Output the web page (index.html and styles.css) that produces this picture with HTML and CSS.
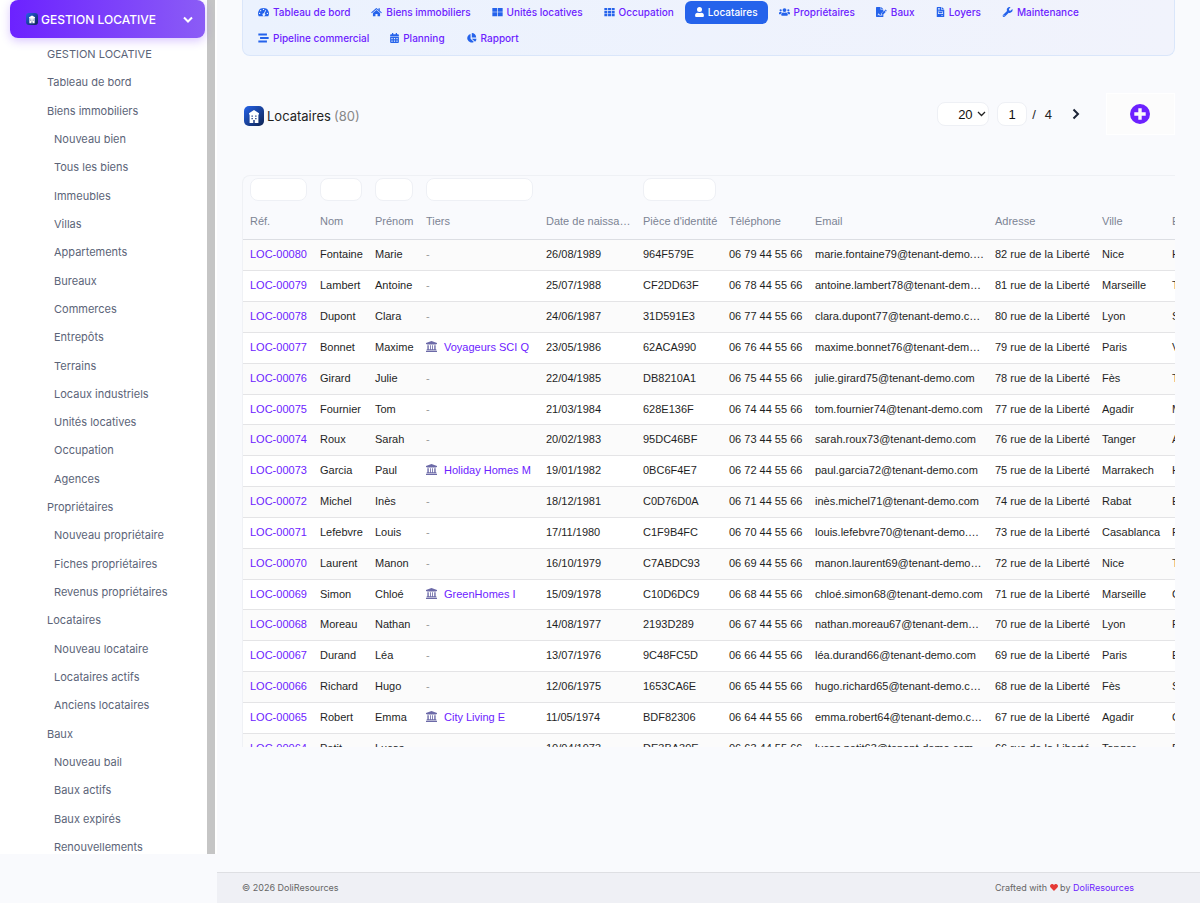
FILE: index.html
```html
<!DOCTYPE html>
<html lang="fr">
<head>
    <meta charset="UTF-8">
    <meta name="viewport" content="width=device-width, initial-scale=1.0">
    <title>Locataires</title>
    <link rel="stylesheet" href="styles.css">
</head>
<body>
    <!-- Icon set -->
    <svg class="icon-defs" aria-hidden="true">
        <defs>
            <linearGradient id="logo-bg" x1="0" y1="0" x2="1" y2="1">
                <stop offset="0" stop-color="#2563eb"/>
                <stop offset="1" stop-color="#0f2350"/>
            </linearGradient>
        </defs>
        <symbol id="i-logo" viewBox="0 0 20 20">
            <rect width="20" height="20" rx="5" fill="url(#logo-bg)"/>
            <path fill="#fff" d="M10 4l5 3.200v1.200h-.6V17H5.600V8.400H5V7.200z"/>
            <path fill="#17357c" d="M7.500 9.500h1.300v1.300H7.500zM11.200 9.500h1.300v1.300h-1.300zM7.500 12h1.300v1.300H7.500zM11.200 12h1.300v1.300h-1.300zM9.300 14h1.400v3H9.300z"/>
        </symbol>
        <symbol id="i-gauge" viewBox="0 0 16 14">
            <path fill-rule="evenodd" d="M8 1a8 8 0 0 0-6.900 12h13.800A8 8 0 0 0 8 1zM8 2.200a1 1 0 1 1 0 2 1 1 0 0 1 0-2zM3.800 4a1 1 0 1 1 0 2 1 1 0 0 1 0-2zM2.300 8a1 1 0 1 1 0 2 1 1 0 0 1 0-2zM13.700 8a1 1 0 1 1 0 2 1 1 0 0 1 0-2zM10.900 4.100l1 .5-2.200 4.600a2 2 0 1 1-1.200-.4z"/>
        </symbol>
        <symbol id="i-home" viewBox="0 0 16 14">
            <path d="M8 1.200l2.900 2.400V1.500h1.900v3.700l3 2.500-.9 1.100L8 3.100 1.100 8.800.2 7.700 7.200 1.400z"/>
            <path d="M8 4.200l5.200 4.300v4.700H9.500V9.800h-3v3.400H2.800V8.500z"/>
        </symbol>
        <symbol id="i-large" viewBox="0 0 16 14">
            <path d="M.5 1h7v5.500h-7zM8.500 1h7v5.500h-7zM.5 7.500h7V13h-7zM8.500 7.500h7V13h-7z"/>
        </symbol>
        <symbol id="i-grid" viewBox="0 0 16 14">
            <path d="M.5 1h4.300v3.400H.5zM5.900 1h4.300v3.400H5.900zM11.200 1h4.300v3.400h-4.300zM.5 5.400h4.300v3.300H.5zM5.900 5.400h4.300v3.300H5.900zM11.200 5.400h4.300v3.300h-4.300zM.5 9.700h4.300V13H.5zM5.900 9.700h4.300V13H5.900zM11.200 9.700h4.300V13h-4.300z"/>
        </symbol>
        <symbol id="i-user" viewBox="0 0 14 16">
            <path d="M7 8a4 4 0 1 0 0-8 4 4 0 0 0 0 8zm2.800 1H9.300a5.400 5.400 0 0 1-4.600 0h-.5A4.200 4.200 0 0 0 0 13.200v1.300A1.500 1.500 0 0 0 1.500 16h11a1.500 1.500 0 0 0 1.500-1.500v-1.300A4.200 4.200 0 0 0 9.800 9z"/>
        </symbol>
        <symbol id="i-users" viewBox="0 0 20 14">
            <path d="M3 6a2 2 0 1 0 0-4 2 2 0 0 0 0 4zm14 0a2 2 0 1 0 0-4 2 2 0 0 0 0 4zm1 1h-2c-.6 0-1 .2-1.400.6 1.300.7 2.200 2 2.400 3.400h2c.6 0 1-.4 1-1V9a2 2 0 0 0-2-2zM10 7a3.500 3.500 0 1 0 0-7 3.500 3.500 0 0 0 0 7zm2.400 1h-.3a4.800 4.800 0 0 1-4.200 0h-.3A3.600 3.600 0 0 0 4 11.600v.9c0 .8.7 1.500 1.500 1.500h9c.8 0 1.500-.7 1.500-1.500v-.9A3.600 3.600 0 0 0 12.400 8zM5.400 7.600A2 2 0 0 0 4 7H2a2 2 0 0 0-2 2v1c0 .6.400 1 1 1h2a4.500 4.500 0 0 1 2.400-3.400z"/>
        </symbol>
        <symbol id="i-sign" viewBox="0 0 18 16">
            <path fill-rule="evenodd" d="M1 0h6.500v4.500H12v2.300L8 10.700V13H6.500l-.8-1.500-1 .3-.7-2-1.400 3.500H4l.6-1.200.9 1.700H10l2-2V16H1a1 1 0 0 1-1-1V1a1 1 0 0 1 1-1zM8.500 0L12 3.500H8.500z"/>
            <path d="M15.500 3.800l2.200 2.200-1.200 1.200-2.200-2.200zM13.700 5.700l2.200 2.200-4.500 4.400H9.200v-2.200z"/>
        </symbol>
        <symbol id="i-invoice" viewBox="0 0 12 16">
            <path fill-rule="evenodd" d="M1 0h6v4.500h5V15a1 1 0 0 1-1 1H1a1 1 0 0 1-1-1V1a1 1 0 0 1 1-1zm1 2v1h3V2zm0 2v1h3V4zm0 3v4h8V7zm1 1h6v2H3zm4 5v1h3v-1zM8 0l4 3.500H8z"/>
        </symbol>
        <symbol id="i-wrench" viewBox="0 0 16 16">
            <path fill-rule="evenodd" d="M15.900 3.700a.4.400 0 0 0-.6-.2l-2.400 2.400-2.200-.4-.4-2.200L12.700.9a.4.400 0 0 0-.2-.6 4.500 4.500 0 0 0-5.300 6L.7 12.800a2 2 0 0 0 2.800 2.800L10 9.100a4.500 4.500 0 0 0 5.900-5.400zM2.100 13.300a.8.800 0 1 1 0 1.500.8.800 0 0 1 0-1.500z"/>
        </symbol>
        <symbol id="i-stream" viewBox="0 0 16 14">
            <path d="M.5.500h12.500v3H.5zM3 5.500h12.500v3H3zM.5 10.500h12.500v3H.5z"/>
        </symbol>
        <symbol id="i-calendar" viewBox="0 0 14 16">
            <path fill-rule="evenodd" d="M3 0h2v2h4V0h2v2h1.500A1.500 1.500 0 0 1 14 3.500V5H0V3.500A1.500 1.500 0 0 1 1.500 2H3zM0 6h14v8.500a1.500 1.500 0 0 1-1.500 1.500h-11A1.500 1.500 0 0 1 0 14.500zm2 2v2h2V8zm4 0v2h2V8zm4 0v2h2V8zm-8 4v2h2v-2zm4 0v2h2v-2zm4 0v2h2v-2z"/>
        </symbol>
        <symbol id="i-pie" viewBox="0 0 17 16">
            <path d="M7 1.500V9l5.300 5.300A7 7 0 1 1 7 1.500zM9 0a7 7 0 0 1 7 7H9zM9 9h7.500a7.500 7.500 0 0 1-2.300 5z"/>
        </symbol>
        <symbol id="i-bank" viewBox="0 0 16 16">
            <path d="M8 0l8 3v1.500h-1V5H1v-.5H0V3zM2 6h2v6h2V6h1.200v6h1.600V6H10v6h2V6h2v6h1v1.500H1V12h1zM0 14.200h16V16H0z"/>
        </symbol>
        <symbol id="i-plus" viewBox="0 0 20 20">
            <path fill-rule="evenodd" d="M10 0a10 10 0 1 0 0 20 10 10 0 0 0 0-20zM8.300 4.300h3.400v4h4v3.400h-4v4H8.300v-4h-4V8.300h4z"/>
        </symbol>
        <symbol id="i-heart" viewBox="0 0 16 14">
            <path d="M8 14L1.200 7.200C-.6 5.300-.3 2.200 1.700.8 3.600-.6 6-.2 7.500 1.400L8 1.900l.5-.5C10-.2 12.400-.6 14.300.8c2 1.400 2.300 4.500.5 6.400z"/>
        </symbol>
    </svg>

    <aside class="sidebar">
        <button class="sidebar-title" type="button">
            <svg class="sidebar-logo"><use href="#i-logo"/></svg>
            <span>GESTION LOCATIVE</span>
            <svg class="chevron" viewBox="0 0 10 7"><path d="M1 1.500l4 4 4-4"/></svg>
        </button>
        <ul class="menu">
            <li><a href="#">GESTION LOCATIVE</a></li>
            <li><a href="#">Tableau de bord</a></li>
            <li><a href="#">Biens immobiliers</a></li>
            <li class="sub"><a href="#">Nouveau bien</a></li>
            <li class="sub"><a href="#">Tous les biens</a></li>
            <li class="sub"><a href="#">Immeubles</a></li>
            <li class="sub"><a href="#">Villas</a></li>
            <li class="sub"><a href="#">Appartements</a></li>
            <li class="sub"><a href="#">Bureaux</a></li>
            <li class="sub"><a href="#">Commerces</a></li>
            <li class="sub"><a href="#">Entrepôts</a></li>
            <li class="sub"><a href="#">Terrains</a></li>
            <li class="sub"><a href="#">Locaux industriels</a></li>
            <li class="sub"><a href="#">Unités locatives</a></li>
            <li class="sub"><a href="#">Occupation</a></li>
            <li class="sub"><a href="#">Agences</a></li>
            <li><a href="#">Propriétaires</a></li>
            <li class="sub"><a href="#">Nouveau propriétaire</a></li>
            <li class="sub"><a href="#">Fiches propriétaires</a></li>
            <li class="sub"><a href="#">Revenus propriétaires</a></li>
            <li><a href="#">Locataires</a></li>
            <li class="sub"><a href="#">Nouveau locataire</a></li>
            <li class="sub"><a href="#">Locataires actifs</a></li>
            <li class="sub"><a href="#">Anciens locataires</a></li>
            <li><a href="#">Baux</a></li>
            <li class="sub"><a href="#">Nouveau bail</a></li>
            <li class="sub"><a href="#">Baux actifs</a></li>
            <li class="sub"><a href="#">Baux expirés</a></li>
            <li class="sub"><a href="#">Renouvellements</a></li>
        </ul>
    </aside>

    <div class="page">
        <main class="content">
            <nav class="tabs">
                <a href="#"><svg><use href="#i-gauge"/></svg>Tableau de bord</a>
                <a href="#"><svg><use href="#i-home"/></svg>Biens immobiliers</a>
                <a href="#"><svg><use href="#i-large"/></svg>Unités locatives</a>
                <a href="#"><svg><use href="#i-grid"/></svg>Occupation</a>
                <a href="#" class="active"><svg class="narrow"><use href="#i-user"/></svg>Locataires</a>
                <a href="#"><svg><use href="#i-users"/></svg>Propriétaires</a>
                <a href="#"><svg><use href="#i-sign"/></svg>Baux</a>
                <a href="#"><svg class="narrow"><use href="#i-invoice"/></svg>Loyers</a>
                <a href="#"><svg><use href="#i-wrench"/></svg>Maintenance</a>
                <a href="#"><svg><use href="#i-stream"/></svg>Pipeline commercial</a>
                <a href="#"><svg class="narrow"><use href="#i-calendar"/></svg>Planning</a>
                <a href="#"><svg><use href="#i-pie"/></svg>Rapport</a>
            </nav>

            <header class="list-header">
                <h1><svg><use href="#i-logo"/></svg>Locataires <span>(80)</span></h1>
                <div class="pager">
                    <select aria-label="Lignes par page"><option>20</option></select>
                    <input type="text" value="1" aria-label="Page">
                    <span>/</span>
                    <a href="#">4</a>
                    <a href="#" class="next" aria-label="Page suivante"><svg viewBox="0 0 8 12"><path d="M1.500 1.500L6 6l-4.500 4.500"/></svg></a>
                </div>
                <a href="#" class="add" aria-label="Nouveau locataire"><svg><use href="#i-plus"/></svg></a>
            </header>

            <div class="table-wrap">
                <table>
                    <colgroup>
                        <col class="c-ref"><col class="c-nom"><col class="c-prenom"><col class="c-tiers"><col class="c-date"><col class="c-piece"><col class="c-tel"><col class="c-email"><col class="c-adresse"><col class="c-ville"><col class="c-last">
                    </colgroup>
                    <thead>
                        <tr class="filters">
                            <td><input type="text" aria-label="Réf."></td>
                            <td><input type="text" aria-label="Nom"></td>
                            <td><input type="text" aria-label="Prénom"></td>
                            <td><input type="text" aria-label="Tiers"></td>
                            <td></td>
                            <td><input type="text" aria-label="Pièce d'identité"></td>
                            <td></td><td></td><td></td><td></td><td></td>
                        </tr>
                        <tr>
                            <th>Réf.</th><th>Nom</th><th>Prénom</th><th>Tiers</th><th>Date de naissance</th><th>Pièce d'identité</th><th>Téléphone</th><th>Email</th><th>Adresse</th><th>Ville</th><th>E</th>
                        </tr>
                    </thead>
                    <tbody>
                        <tr><td><a href="#">LOC-00080</a></td><td>Fontaine</td><td>Marie</td><td class="none">-</td><td>26/08/1989</td><td>964F579E</td><td>06 79 44 55 66</td><td>marie.fontaine79@tenant-demo.com</td><td>82 rue de la Liberté</td><td>Nice</td><td>H</td></tr>
                        <tr><td><a href="#">LOC-00079</a></td><td>Lambert</td><td>Antoine</td><td class="none">-</td><td>25/07/1988</td><td>CF2DD63F</td><td>06 78 44 55 66</td><td>antoine.lambert78@tenant-demo.com</td><td>81 rue de la Liberté</td><td>Marseille</td><td>T</td></tr>
                        <tr><td><a href="#">LOC-00078</a></td><td>Dupont</td><td>Clara</td><td class="none">-</td><td>24/06/1987</td><td>31D591E3</td><td>06 77 44 55 66</td><td>clara.dupont77@tenant-demo.com</td><td>80 rue de la Liberté</td><td>Lyon</td><td>S</td></tr>
                        <tr><td><a href="#">LOC-00077</a></td><td>Bonnet</td><td>Maxime</td><td><a href="#"><svg><use href="#i-bank"/></svg>Voyageurs SCI Q</a></td><td>23/05/1986</td><td>62ACA990</td><td>06 76 44 55 66</td><td>maxime.bonnet76@tenant-demo.com</td><td>79 rue de la Liberté</td><td>Paris</td><td>V</td></tr>
                        <tr><td><a href="#">LOC-00076</a></td><td>Girard</td><td>Julie</td><td class="none">-</td><td>22/04/1985</td><td>DB8210A1</td><td>06 75 44 55 66</td><td>julie.girard75@tenant-demo.com</td><td>78 rue de la Liberté</td><td>Fès</td><td>T</td></tr>
                        <tr><td><a href="#">LOC-00075</a></td><td>Fournier</td><td>Tom</td><td class="none">-</td><td>21/03/1984</td><td>628E136F</td><td>06 74 44 55 66</td><td>tom.fournier74@tenant-demo.com</td><td>77 rue de la Liberté</td><td>Agadir</td><td>M</td></tr>
                        <tr><td><a href="#">LOC-00074</a></td><td>Roux</td><td>Sarah</td><td class="none">-</td><td>20/02/1983</td><td>95DC46BF</td><td>06 73 44 55 66</td><td>sarah.roux73@tenant-demo.com</td><td>76 rue de la Liberté</td><td>Tanger</td><td>A</td></tr>
                        <tr><td><a href="#">LOC-00073</a></td><td>Garcia</td><td>Paul</td><td><a href="#"><svg><use href="#i-bank"/></svg>Holiday Homes M</a></td><td>19/01/1982</td><td>0BC6F4E7</td><td>06 72 44 55 66</td><td>paul.garcia72@tenant-demo.com</td><td>75 rue de la Liberté</td><td>Marrakech</td><td>H</td></tr>
                        <tr><td><a href="#">LOC-00072</a></td><td>Michel</td><td>Inès</td><td class="none">-</td><td>18/12/1981</td><td>C0D76D0A</td><td>06 71 44 55 66</td><td>inès.michel71@tenant-demo.com</td><td>74 rue de la Liberté</td><td>Rabat</td><td>E</td></tr>
                        <tr><td><a href="#">LOC-00071</a></td><td>Lefebvre</td><td>Louis</td><td class="none">-</td><td>17/11/1980</td><td>C1F9B4FC</td><td>06 70 44 55 66</td><td>louis.lefebvre70@tenant-demo.com</td><td>73 rue de la Liberté</td><td>Casablanca</td><td>F</td></tr>
                        <tr><td><a href="#">LOC-00070</a></td><td>Laurent</td><td>Manon</td><td class="none">-</td><td>16/10/1979</td><td>C7ABDC93</td><td>06 69 44 55 66</td><td>manon.laurent69@tenant-demo.com</td><td>72 rue de la Liberté</td><td>Nice</td><td>T</td></tr>
                        <tr><td><a href="#">LOC-00069</a></td><td>Simon</td><td>Chloé</td><td><a href="#"><svg><use href="#i-bank"/></svg>GreenHomes I</a></td><td>15/09/1978</td><td>C10D6DC9</td><td>06 68 44 55 66</td><td>chloé.simon68@tenant-demo.com</td><td>71 rue de la Liberté</td><td>Marseille</td><td>C</td></tr>
                        <tr><td><a href="#">LOC-00068</a></td><td>Moreau</td><td>Nathan</td><td class="none">-</td><td>14/08/1977</td><td>2193D289</td><td>06 67 44 55 66</td><td>nathan.moreau67@tenant-demo.com</td><td>70 rue de la Liberté</td><td>Lyon</td><td>F</td></tr>
                        <tr><td><a href="#">LOC-00067</a></td><td>Durand</td><td>Léa</td><td class="none">-</td><td>13/07/1976</td><td>9C48FC5D</td><td>06 66 44 55 66</td><td>léa.durand66@tenant-demo.com</td><td>69 rue de la Liberté</td><td>Paris</td><td>E</td></tr>
                        <tr><td><a href="#">LOC-00066</a></td><td>Richard</td><td>Hugo</td><td class="none">-</td><td>12/06/1975</td><td>1653CA6E</td><td>06 65 44 55 66</td><td>hugo.richard65@tenant-demo.com</td><td>68 rue de la Liberté</td><td>Fès</td><td>S</td></tr>
                        <tr><td><a href="#">LOC-00065</a></td><td>Robert</td><td>Emma</td><td><a href="#"><svg><use href="#i-bank"/></svg>City Living E</a></td><td>11/05/1974</td><td>BDF82306</td><td>06 64 44 55 66</td><td>emma.robert64@tenant-demo.com</td><td>67 rue de la Liberté</td><td>Agadir</td><td>C</td></tr>
                        <tr><td><a href="#">LOC-00064</a></td><td>Petit</td><td>Lucas</td><td class="none">-</td><td>10/04/1973</td><td>DE3BA39E</td><td>06 63 44 55 66</td><td>lucas.petit63@tenant-demo.com</td><td>66 rue de la Liberté</td><td>Tanger</td><td>D</td></tr>
                    </tbody>
                </table>
            </div>
        </main>

        <footer class="footer">
            <span>© 2026 DoliResources</span>
            <span>Crafted with <svg><use href="#i-heart"/></svg> by <a href="#">DoliResources</a></span>
        </footer>
    </div>
</body>
</html>
```
FILE: styles.css
```css
* {
    box-sizing: border-box;
}
body {
    margin: 0;
    min-height: 100vh;
    display: flex;
    background-color: #f9fafd;
    font-family: Inter, "Open Sans", sans-serif;
    color: #1f1f1f;
}
a {
    color: #6c22ff;
    text-decoration: none;
}
svg {
    fill: currentColor;
}
.icon-defs {
    position: absolute;
    width: 0;
    height: 0;
}

/* Sidebar */
.sidebar {
    width: 217px;
    height: calc(100vh - 49px);
    flex-shrink: 0;
    overflow: hidden;
    background: linear-gradient(#c5c5c5, #c5c5c5) 207px 0 / 8px 100% no-repeat #fff;
}
.sidebar-title {
    display: flex;
    align-items: center;
    gap: 3px;
    width: 195px;
    height: 38px;
    margin: 0 10px 2px;
    padding: 0 12px 0 16px;
    border: none;
    border-radius: 8px;
    background: linear-gradient(90deg, #6c22ff, #8b5cf6);
    box-shadow: 0 3px 10px rgba(108, 34, 255, 0.25);
    color: #fff;
    font-family: inherit;
    font-size: 12px;
    font-weight: 500;
    cursor: pointer;
}
.sidebar-logo {
    width: 12px;
    height: 12px;
}
.chevron {
    width: 10px;
    height: 7px;
    margin-left: auto;
    fill: none;
    stroke: #fff;
    stroke-width: 2;
}
.menu {
    display: grid;
    grid-auto-rows: 1fr;
    height: calc(100vh - 82px);
    margin: 0;
    padding: 0 16px 0 47px;
    list-style: none;
    font-size: 11px;
}
.menu li {
    display: flex;
    align-items: center;
}
.menu .sub {
    padding-left: 7px;
}
.menu a {
    color: #5b6478;
}

/* Main area */
.page {
    flex: 1;
    min-width: 0;
    display: flex;
    flex-direction: column;
}
.content {
    flex: 1;
    padding: 0 25px;
}
.tabs {
    display: flex;
    flex-wrap: wrap;
    gap: 3px 1px;
    padding: 1px 5px 5px;
    border: 1px solid #dae6fa;
    border-top: none;
    border-radius: 0 0 8px 8px;
    background: linear-gradient(90deg, #ebf2fe, #f1f3fc);
    font-size: 10px;
    font-weight: 500;
}
.tabs a {
    display: flex;
    align-items: center;
    gap: 4px;
    height: 23px;
    padding: 0 10px 1px;
    border-radius: 6px;
}
.tabs svg {
    width: 11px;
    height: 10px;
    color: #2563eb;
}
.tabs .narrow {
    width: 9px;
}
.tabs .active {
    background-color: #2563eb;
    color: #fff;
}
.tabs .active svg {
    color: #fff;
}

.list-header {
    display: flex;
    align-items: center;
    height: 44px;
    margin: 36px 0 39px;
}
.list-header h1 {
    display: flex;
    align-items: center;
    gap: 3px;
    margin: 0 auto 0 2px;
    padding-top: 4px;
    font-size: 13px;
    font-weight: 400;
}
.list-header h1 svg {
    width: 20px;
    height: 20px;
}
.list-header h1 span {
    color: #888;
}
.pager {
    display: flex;
    align-items: center;
    font-family: "Liberation Sans", Arial, sans-serif;
    font-size: 13px;
}
.pager select,
.pager input,
.filters input {
    height: 24px;
    border: 1px solid #eef0f5;
    border-radius: 8px;
    background-color: #fff;
    color: #111;
    font: inherit;
}
.pager select {
    width: 52px;
    margin-right: 8px;
    padding-left: 20px;
    appearance: none;
    background-image: url("data:image/svg+xml,%3Csvg xmlns='http://www.w3.org/2000/svg' width='9' height='6' fill='none' stroke='%23222' stroke-width='1.3'%3E%3Cpath d='M1 1l3.500 3.500L8 1'/%3E%3C/svg%3E");
    background-repeat: no-repeat;
    background-position: right 2px center;
}
.pager input {
    width: 30px;
    margin-right: 5px;
    padding: 0;
    text-align: center;
}
.pager a {
    margin-left: 9px;
    color: #222;
}
.pager .next {
    margin-left: 20px;
    line-height: 0;
}
.pager .next svg {
    width: 8px;
    height: 12px;
    fill: none;
    stroke: #1c2336;
    stroke-width: 2;
}
.add {
    display: flex;
    align-items: center;
    justify-content: center;
    width: 69px;
    height: 42px;
    margin-left: 26px;
    padding-right: 2px;
    border: 1px solid #fff;
    background-color: #fcfcfc;
}
.add svg {
    width: 20px;
    height: 20px;
}

/* Tenant table */
.table-wrap {
    height: 572px;
    overflow: hidden;
    border: 1px solid #eff1f5;
    border-width: 1px 0 0 1px;
    border-radius: 8px 0 0 0;
    font-family: "Liberation Sans", Arial, sans-serif;
    font-size: 11px;
}
table {
    width: 1035px;
    table-layout: fixed;
    border-collapse: separate;
    border-spacing: 0;
}
.c-ref { width: 70px; }
.c-nom { width: 55px; }
.c-prenom { width: 51px; }
.c-tiers { width: 120px; }
.c-date { width: 97px; }
.c-piece { width: 86px; }
.c-tel { width: 86px; }
.c-email { width: 180px; }
.c-adresse { width: 107px; }
.c-ville { width: 70px; }
.c-last { width: 113px; }
th,
td {
    height: 31px;
    padding: 0 4px 0 7px;
    overflow: hidden;
    text-align: left;
    text-overflow: ellipsis;
    white-space: nowrap;
}
th {
    height: 37px;
    border-bottom: 1px solid #dcdee3;
    color: #7c8494;
    font-weight: 400;
}
.filters td {
    height: 27px;
    padding-right: 6px;
    overflow: visible;
}
.filters input {
    display: block;
    width: 100%;
    height: 23px;
}
tbody td {
    padding-bottom: 2px;
    border-bottom: 1px solid #e4e4e6;
    background-color: #fff;
}
th:nth-child(3),
tbody td:nth-child(2),
tbody td:nth-child(3) {
    padding-right: 0;
}
tbody tr:nth-child(odd) td {
    background-color: #fbfbfb;
}
tbody tr:nth-child(6n) td {
    height: 30px;
}
td svg {
    width: 11px;
    height: 11px;
    margin-right: 7px;
    color: #6c6aa8;
    vertical-align: -1px;
}
td.none {
    color: #999;
}

/* Footer */
.footer {
    display: flex;
    align-items: center;
    justify-content: space-between;
    height: 31px;
    padding: 0 66px 2px 25px;
    border-top: 1px solid #dedfe3;
    background-color: #eff0f5;
    color: #666;
    font-size: 9px;
}
.footer svg {
    width: 8px;
    height: 7px;
    color: #e53935;
}
```
